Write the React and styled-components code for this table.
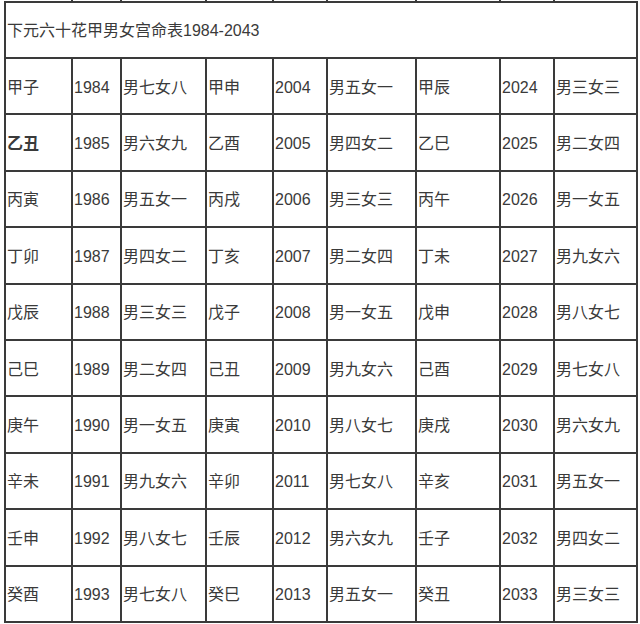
import styled, { createGlobalStyle } from "styled-components";

const GlobalStyle = createGlobalStyle`
  body {
    margin: 0;
    background: #ffffff;
  }
`;

const Page = styled.div`
  padding: 0 0 0 4px;
  width: 640px;
  height: 624px;
  overflow: hidden;
  box-sizing: border-box;
`;

const Table = styled.table`
  border-collapse: collapse;
  table-layout: fixed;
  width: 632px;
  font-family: "Liberation Sans", "Noto Sans CJK SC", sans-serif;
  font-size: 16px;
  line-height: 20px;
  color: #3a3a3a;
`;

const StubCell = styled.td`
  height: 1px;
  padding: 0;
  border-left: 2px solid #3a3a3a;
  border-right: 2px solid #3a3a3a;
  border-bottom: 2px solid #3a3a3a;
  border-top: none;
  &:first-child {
    border-left: none;
  }
  &:last-child {
    border-right: none;
  }
`;

const TitleCell = styled.td`
  height: 52px;
  padding: 2px 0 0 1px;
  border: 2px solid #3a3a3a;
  text-align: left;
  vertical-align: middle;
  white-space: nowrap;
`;

const Cell = styled.td`
  height: 51.4px;
  padding: 3px 0 0 1px;
  border: 2px solid #3a3a3a;
  vertical-align: middle;
  white-space: nowrap;
  overflow: hidden;
  font-weight: ${(p) => (p.$bold ? 700 : 400)};
`;

const widths = [67, 49, 85, 67, 54, 89, 84, 54, 83];

const rows = [
  ["甲子", "1984", "男七女八", "甲申", "2004", "男五女一", "甲辰", "2024", "男三女三"],
  ["乙丑", "1985", "男六女九", "乙酉", "2005", "男四女二", "乙巳", "2025", "男二女四"],
  ["丙寅", "1986", "男五女一", "丙戌", "2006", "男三女三", "丙午", "2026", "男一女五"],
  ["丁卯", "1987", "男四女二", "丁亥", "2007", "男二女四", "丁未", "2027", "男九女六"],
  ["戊辰", "1988", "男三女三", "戊子", "2008", "男一女五", "戊申", "2028", "男八女七"],
  ["己巳", "1989", "男二女四", "己丑", "2009", "男九女六", "己酉", "2029", "男七女八"],
  ["庚午", "1990", "男一女五", "庚寅", "2010", "男八女七", "庚戌", "2030", "男六女九"],
  ["辛未", "1991", "男九女六", "辛卯", "2011", "男七女八", "辛亥", "2031", "男五女一"],
  ["壬申", "1992", "男八女七", "壬辰", "2012", "男六女九", "壬子", "2032", "男四女二"],
  ["癸酉", "1993", "男七女八", "癸巳", "2013", "男五女一", "癸丑", "2033", "男三女三"],
];

export default function App() {
  return (
    <Page>
      <GlobalStyle />
      <Table>
        <colgroup>
          {widths.map((w, i) => (
            <col key={i} style={{ width: w }} />
          ))}
        </colgroup>
        <tbody>
          <tr>
            {widths.map((_, i) => (
              <StubCell key={i} />
            ))}
          </tr>
          <tr>
            <TitleCell colSpan={9}>下元六十花甲男女宫命表1984-2043</TitleCell>
          </tr>
          {rows.map((r, ri) => (
            <tr key={ri}>
              {r.map((c, ci) => (
                <Cell key={ci} $bold={ri === 1 && ci === 0}>
                  {c}
                </Cell>
              ))}
            </tr>
          ))}
        </tbody>
      </Table>
    </Page>
  );
}
